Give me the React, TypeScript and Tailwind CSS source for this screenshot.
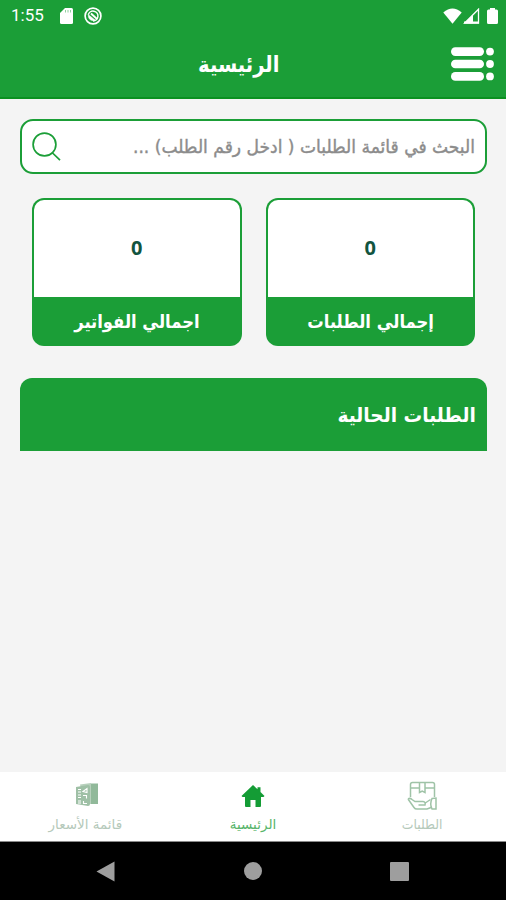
import type { ReactNode } from 'react';

type StatCardProps = {
  label: string;
  value: number;
};

type TabProps = {
  label: string;
  labelClass: string;
  children: ReactNode;
};

const StatusBar = () => (
  <div dir="ltr" className="flex h-[31px] items-center justify-between pl-[11px] pr-[8px] text-white">
    <div className="flex h-full items-center">
      <span className="w-[34px] whitespace-nowrap font-['Roboto',sans-serif] text-[17px] leading-none">1:55</span>
      <svg className="ml-[15px]" width="13" height="16" viewBox="0 0 13 16">
        <path d="M5 0h6.500Q13 0 13 1.500v13Q13 16 11.500 16h-10Q0 16 0 14.500V5z" fill="#fff" />
        <path d="M5.500 2v2.500M8 2v2.500M10.500 2v2.500" stroke="#1b9e37" strokeWidth="0.800" opacity="0.600" />
      </svg>
      <svg className="ml-[11px]" width="18" height="18" viewBox="0 0 18 18" fill="none" stroke="#fff">
        <circle cx="9" cy="9" r="7.900" strokeWidth="1.700" />
        <path d="M4.300 7.700A4.900 4.900 0 1 1 9 13.900" strokeWidth="1.500" />
        <path d="M4.200 7.500Q4 13.500 9.500 13.700L11 13z" fill="#fff" strokeWidth="0.500" />
        <path d="M7 6.500l6 5.500" strokeWidth="1.800" />
      </svg>
    </div>
    <div className="flex h-full items-center">
      <svg width="19" height="16" viewBox="0 0 19 16">
        <path d="M0.300 4.500Q9.500-3.500 18.700 4.500L9.500 15.700z" fill="#fff" />
      </svg>
      <svg className="ml-px" width="17" height="16" viewBox="0 0 17 16">
        <path d="M1.500 15.200L15.500 1.200v14z" fill="none" stroke="#fff" strokeWidth="1.300" />
        <path d="M1.500 15.200L10 6.800v8.400z" fill="#fff" />
        <path d="M1 14.500h15" stroke="#fff" strokeWidth="2" />
      </svg>
      <svg className="ml-[7px]" width="11" height="16" viewBox="0 0 11 16">
        <path d="M3 0h5v1.500h1.500q1.500 0 1.500 1.500v11.500Q11 16 9.500 16h-8Q0 16 0 14.500V3q0-1.500 1.500-1.500H3z" fill="#fff" />
      </svg>
    </div>
  </div>
);

const MenuIcon = () => (
  <svg width="43" height="34" viewBox="0 0 43 34" fill="#fff">
    <rect x="0" y="0.300" width="33" height="8.600" rx="4.300" />
    <rect x="0" y="12.700" width="33" height="8.600" rx="4.300" />
    <rect x="0" y="25.100" width="33" height="8.600" rx="4.300" />
    <circle cx="39" cy="4.600" r="3.900" />
    <circle cx="39" cy="17" r="3.900" />
    <circle cx="39" cy="29.400" r="3.900" />
  </svg>
);

const SearchIcon = () => (
  <svg width="29" height="29" viewBox="0 0 29 29" fill="none" stroke="#1b9e37" strokeWidth="1.700">
    <circle cx="12.500" cy="12.500" r="11.400" />
    <path d="M20 20.500l8 7.700" />
  </svg>
);

const StatCard = ({ label, value }: StatCardProps) => (
  <div className="flex h-[148px] flex-1 flex-col rounded-xl bg-[#1b9e37] px-[2px] pt-[2px]">
    <div className="flex h-[97px] items-center justify-center rounded-t-[10px] bg-white pb-[2px] font-['Noto_Sans',sans-serif] text-[20px] font-bold text-[#125440]">
      {value}
    </div>
    <div className="flex flex-1 items-center justify-center font-bold text-white">
      <span className="inline-block scale-x-[0.91] whitespace-nowrap text-[18px]">{label}</span>
    </div>
  </div>
);

const Tab = ({ label, labelClass, children }: TabProps) => (
  <div className="flex flex-1 flex-col items-center pt-[8px]">
    <div className="flex h-[32px] items-center justify-center">{children}</div>
    <span className={labelClass}>{label}</span>
  </div>
);

const DeliveryIcon = () => (
  <svg width="30" height="30" viewBox="0 0 30 30" fill="none" stroke="#9fc3a7" strokeWidth="1.500">
    <path d="M3.500 16V3.500Q3.500 1.500 5.500 1.500h20q2 0 2 2V16M3.500 7h9M18 7h9.500M12.500 1.500v10l2.700-1.500 2.800 1.500v-10" />
    <path d="M1 18q2-1.500 4 .5l3 2h8q3 .5 2 3.500H11.500M17.500 22.500l6-4M1 18l6 8.500q1 1.500 3 1.500h10l4-1.500" />
    <path d="M25 17.500l4-.5v11h-4q-2.500-5 0-10.500z" />
  </svg>
);

const HomeIcon = () => (
  <svg width="24" height="22" viewBox="0 0 24 22" fill="#149c35">
    <path d="M12 0l4.500 4.200V2.200h3v4.700L23.500 11l-1 1h-2.500v9q0 1-1 1h-4.500v-7h-5v7H5q-1 0-1-1v-9H1.500l-1-1z" />
  </svg>
);

const PriceListIcon = () => (
  <svg className="mb-[4px] ml-[6px]" width="24" height="23" viewBox="0 0 24 23">
    <path d="M5 1.500L16 0v21H9z" fill="#b7d0bc" />
    <path d="M16 0.500h7v20.500h-7z" fill="#91b99a" />
    <path d="M1 4L13 2q2 0 2 2v17q0 2-2 2L1 21z" fill="#9fc0a6" />
    <path d="M3 6.500h3M3 9h3M8 8.500l4-3v4zM3 12h3M3 14.500h3M8 12.500h3.500v3M3 18h3M3 20h3M8.500 18v2.500h3.500" fill="none" stroke="#fff" strokeWidth="1.100" />
  </svg>
);

const SystemNav = () => (
  <div dir="ltr" className="flex h-[58px] items-center justify-between bg-black pl-[96px] pr-[97px]">
    <svg width="19" height="21" viewBox="0 0 19 21">
      <path d="M18.500 0.500v20L0.500 10.500z" fill="#9e9e9e" />
    </svg>
    <div className="h-[18px] w-[18px] rounded-full bg-[#9e9e9e]" />
    <div className="h-[19px] w-[19px] rounded-[1px] bg-[#9e9e9e]" />
  </div>
);

export default function App() {
  return (
    <div dir="rtl" className="flex h-[900px] w-[506px] flex-col overflow-hidden bg-[#f4f4f4] font-['DejaVu_Sans',sans-serif]">
      <header className="h-[99px] border-b-2 border-[#0b9120] bg-[#1b9e37]">
        <StatusBar />
        <div className="flex h-[66px] items-center justify-between pl-[193px] pr-[12px]">
          <MenuIcon />
          <h1 className="origin-center scale-x-[0.89] whitespace-nowrap text-[22px] font-bold text-white">الرئيسية</h1>
        </div>
      </header>

      <main className="flex-1 pl-[20px] pr-[19px] pt-[20px]">
        <div className="flex h-[55px] items-center justify-between rounded-[13px] border-2 border-[#1b9e37] bg-white pl-[10px] pr-[10px]">
          <span className="origin-right scale-x-[0.95] whitespace-nowrap text-[18px] text-[#8c8c8c] [-webkit-text-stroke:0.4px_#8c8c8c]">
            البحث في قائمة الطلبات ( ادخل رقم الطلب) ...
          </span>
          <SearchIcon />
        </div>
        <div className="mt-[24px] flex gap-6 px-[12px]">
          <StatCard label="إجمالي الطلبات" value={0} />
          <StatCard label="اجمالي الفواتير" value={0} />
        </div>
        <section className="mt-[32px] flex h-[73px] items-center rounded-t-xl bg-[#1b9e37] pr-[11px]">
          <h2 className="origin-right scale-x-[0.93] whitespace-nowrap text-[20px] font-bold text-white">الطلبات الحالية</h2>
        </section>
      </main>

      <nav className="flex h-[70px] border-b border-[#8a8a8a] bg-white">
        <Tab label="الطلبات" labelClass="mt-[4px] inline-block scale-x-[0.92] whitespace-nowrap text-[13.5px] leading-[16px] text-[#b5c9ba]">
          <DeliveryIcon />
        </Tab>
        <Tab label="الرئيسية" labelClass="mt-[4px] whitespace-nowrap text-[13.5px] leading-[16px] text-[#58b56b]">
          <HomeIcon />
        </Tab>
        <Tab label="قائمة الأسعار" labelClass="mt-[4px] ml-[2px] whitespace-nowrap text-[13.5px] leading-[16px] text-[#b5c9ba]">
          <PriceListIcon />
        </Tab>
      </nav>
      <SystemNav />
    </div>
  );
}
